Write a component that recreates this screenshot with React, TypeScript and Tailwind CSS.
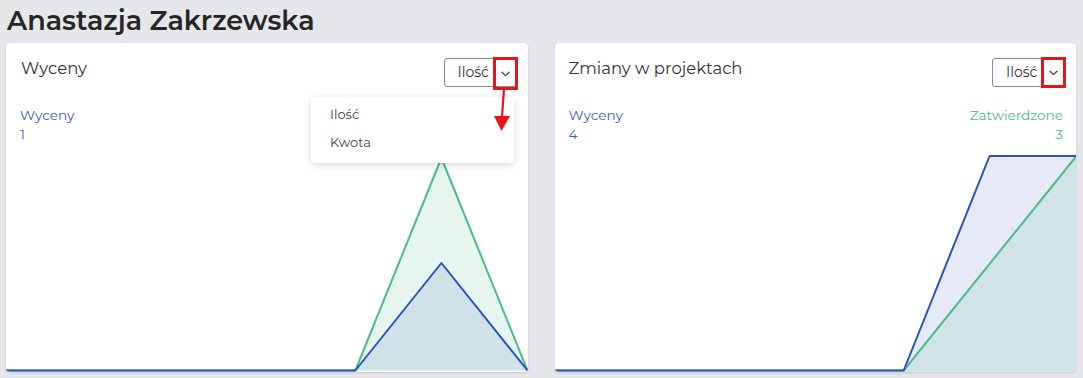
import React from "react";

const BLUE = "#2c52c2";
const GREEN = "#4dbd88";
const BLUE_FILL = "rgba(63,95,192,0.13)";
const GREEN_FILL = "rgba(77,189,136,0.14)";

function Chevron() {
  return (
    <svg width="9" height="6" viewBox="0 0 9 6" fill="none">
      <path d="M1 1.2 L4.5 4.6 L8 1.2" stroke="#444" strokeWidth="1.3" strokeLinecap="round" strokeLinejoin="round" />
    </svg>
  );
}

function SelectButton({ tall }: { tall?: boolean }) {
  return (
    <div className="relative h-[29px] w-[73px]">
      <div className="flex h-full w-full items-center rounded-[3px] border border-[#8c8c8c] bg-white pl-[13px] text-[14px] text-[#333]">
        Ilość
      </div>
      <div
        className={`absolute right-[-1px] top-[-1px] flex w-[25px] items-center justify-center border-[3px] border-[#e8141c] ${
          tall ? "h-[33px]" : "h-[31px]"
        }`}
      >
        <Chevron />
      </div>
    </div>
  );
}

function LeftChart() {
  return (
    <svg className="block h-[217px] w-full" viewBox="0 0 521 217" preserveAspectRatio="none">
      <polygon points="349,215.5 435,3 521,215.5" fill={GREEN_FILL} />
      <polygon points="349,215.5 435,108 521,215.5" fill={BLUE_FILL} />
      <polyline points="0,215.5 349,215.5 435,3 521,215.5" fill="none" stroke={GREEN} strokeWidth="2" strokeLinejoin="round" />
      <polyline points="0,215.5 349,215.5 435,108 521,215.5" fill="none" stroke={BLUE} strokeWidth="2" strokeLinejoin="round" />
    </svg>
  );
}

function RightChart() {
  return (
    <svg className="block h-[217px] w-full" viewBox="0 0 522 217" preserveAspectRatio="none">
      <polygon points="349,215.5 435,1 522,1 522,217 349,217" fill={BLUE_FILL} />
      <polygon points="349,215.5 522,1 522,217 349,217" fill={GREEN_FILL} />
      <polyline points="0,215.5 349,215.5 522,1" fill="none" stroke={GREEN} strokeWidth="2" strokeLinejoin="round" />
      <polyline points="0,215.5 349,215.5 435,1 522,1" fill="none" stroke={BLUE} strokeWidth="2" strokeLinejoin="round" />
    </svg>
  );
}

export default function App() {
  return (
    <div
      className="h-[378px] w-full overflow-hidden bg-[#e5e7eb] pl-[6px] pr-[7px]"
      style={{ fontFamily: "Montserrat, 'Open Sans', 'Noto Sans', sans-serif" }}
    >
      <h1 className="pl-[1px] pt-[2px] text-[27px] font-semibold leading-[38px] text-[#262626]">
        Anastazja Zakrzewska
      </h1>
      <div className="mt-[3px] grid grid-cols-2 gap-[27px]">
        {/* Left card */}
        <div className="relative flex h-[329px] flex-col overflow-hidden rounded-[4px] bg-white shadow-[0_1px_3px_rgba(0,0,0,0.12)]">
          <div className="flex items-start justify-between pl-[15px] pr-[11px] pt-[15px]">
            <div className="mt-[-1px] text-[16.5px] leading-[22px] text-[#333]">Wyceny</div>
            <SelectButton tall />
          </div>
          <div className="mt-[19px] flex justify-between px-[14px] text-[13.6px] leading-[19px]">
            <div className="text-[#3b5bc4]">
              <div>Wyceny</div>
              <div>1</div>
            </div>
          </div>
          <div className="mt-auto">
            <LeftChart />
          </div>
        </div>

        {/* Right card */}
        <div className="relative flex h-[329px] flex-col overflow-hidden rounded-[4px] bg-white shadow-[0_1px_3px_rgba(0,0,0,0.12)]">
          <div className="flex items-start justify-between pl-[14px] pr-[11px] pt-[15px]">
            <div className="mt-[-1px] text-[16.5px] leading-[22px] text-[#333]">Zmiany w projektach</div>
            <SelectButton />
          </div>
          <div className="mt-[19px] flex justify-between pl-[14px] pr-[13px] text-[13.6px] leading-[19px]">
            <div className="text-[#3b5bc4]">
              <div>Wyceny</div>
              <div>4</div>
            </div>
            <div className="text-right text-[#4cbb85]">
              <div>Zatwierdzone</div>
              <div>3</div>
            </div>
          </div>
          <div className="mt-auto">
            <RightChart />
          </div>
        </div>
      </div>

      {/* Dropdown menu overlay for left card */}
      <div className="pointer-events-none absolute left-[311px] top-[97px] h-[66px] w-[203px] rounded-[4px] bg-white shadow-[0_2px_8px_rgba(0,0,0,0.15)]">
        <div className="pl-[19px] pt-[3px] text-[13px] leading-[28px] text-[#444]">
          <div>Ilość</div>
          <div>Kwota</div>
        </div>
      </div>

      {/* Red annotation arrow */}
      <svg className="pointer-events-none absolute left-[490px] top-[88px]" width="24" height="46" viewBox="0 0 24 46">
        <line x1="14" y1="1" x2="12" y2="29" stroke="#e8141c" strokeWidth="2.2" />
        <polygon points="4,28 20,28 11.5,43" fill="#e8141c" />
      </svg>
    </div>
  );
}
